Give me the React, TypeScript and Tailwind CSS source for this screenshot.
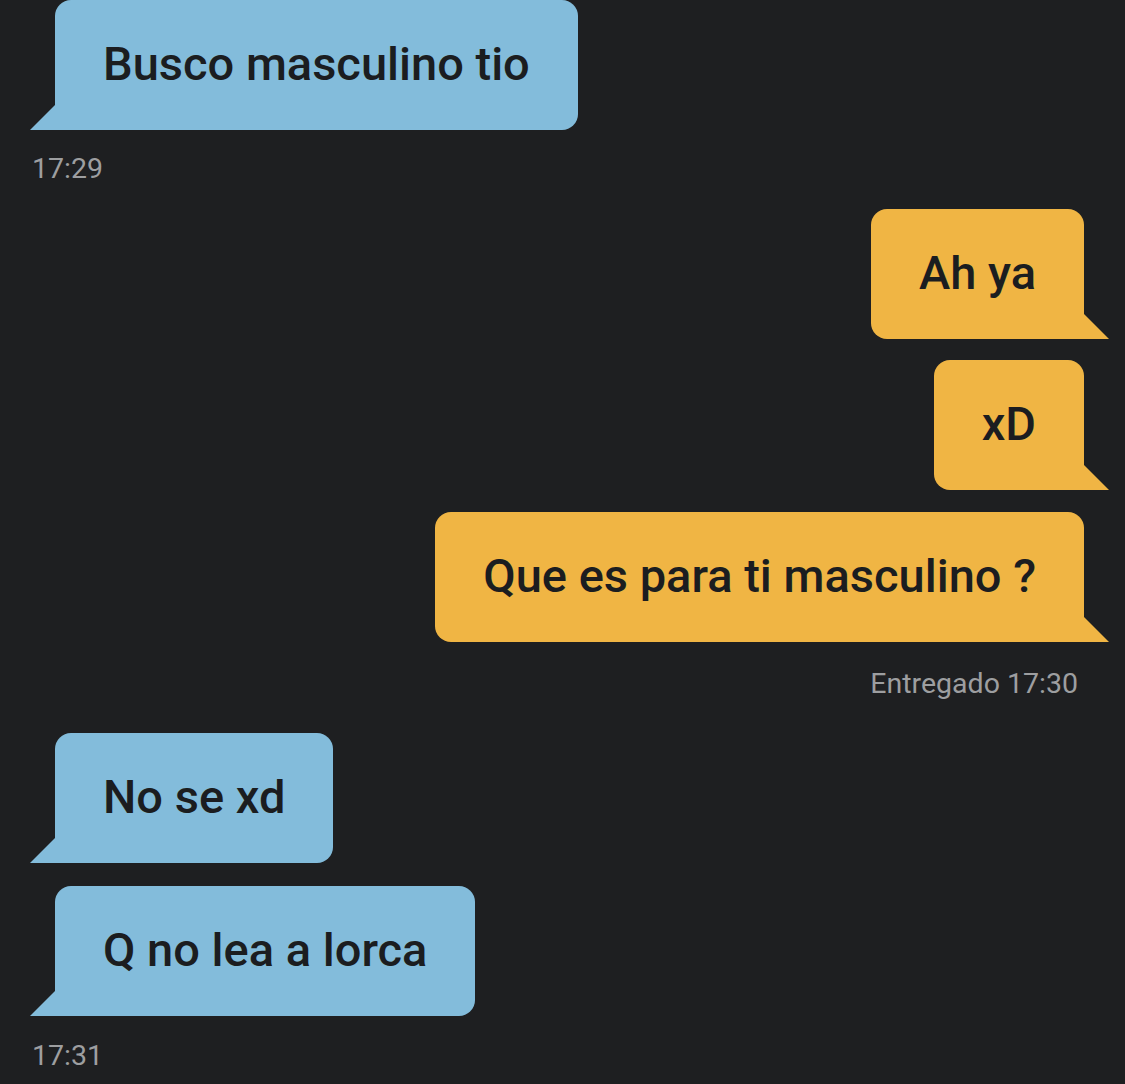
import React from "react";

type Side = "left" | "right";

function Bubble({ text, side, className = "" }: { text: string; side: Side; className?: string }) {
    const left = side === "left";
    return (
        <div
            className={
                "relative h-[130px] px-12 pb-[4px] flex items-center rounded-[16px] " +
                (left ? "self-start ml-[55px] bg-[#83bcdb] rounded-bl-none " : "self-end mr-[41px] bg-[#f0b544] rounded-br-none ") +
                className
            }
        >
            <span className="text-[47px] font-medium text-[#1b1d20] leading-none whitespace-nowrap">{text}</span>
            {left ? (
                <svg className="absolute -left-[25px] bottom-0" width="25" height="25" viewBox="0 0 25 25">
                    <polygon points="25,0 25,25 0,25" fill="#83bcdb" />
                </svg>
            ) : (
                <svg className="absolute -right-[25px] bottom-0" width="25" height="25" viewBox="0 0 25 25">
                    <polygon points="0,0 25,25 0,25" fill="#f0b544" />
                </svg>
            )}
        </div>
    );
}

function Stamp({ text, side, className = "" }: { text: string; side: Side; className?: string }) {
    return (
        <div
            className={
                "text-[28.5px] leading-[30px] text-[#9d9ea0] whitespace-nowrap " +
                (side === "left" ? "self-start ml-[32px] " : "self-end mr-[47px] ") +
                className
            }
        >
            {text}
        </div>
    );
}

export default function App() {
    return (
        <div className="w-[1125px] h-[1084px] overflow-hidden bg-[#1e1f21]" style={{ fontFamily: "Roboto, 'Liberation Sans', sans-serif" }}>
            <div className="flex flex-col">
                <Bubble side="left" text="Busco masculino tio" />
                <Stamp side="left" text="17:29" className="mt-[24px]" />
                <Bubble side="right" text="Ah ya" className="mt-[25px]" />
                <Bubble side="right" text="xD" className="mt-[21px]" />
                <Bubble side="right" text="Que es para ti masculino ?" className="mt-[22px]" />
                <Stamp side="right" text="Entregado 17:30" className="mt-[27px]" />
                <Bubble side="left" text="No se xd" className="mt-[34px]" />
                <Bubble side="left" text="Q no lea a lorca" className="mt-[23px]" />
                <Stamp side="left" text="17:31" className="mt-[25px]" />
            </div>
        </div>
    );
}
